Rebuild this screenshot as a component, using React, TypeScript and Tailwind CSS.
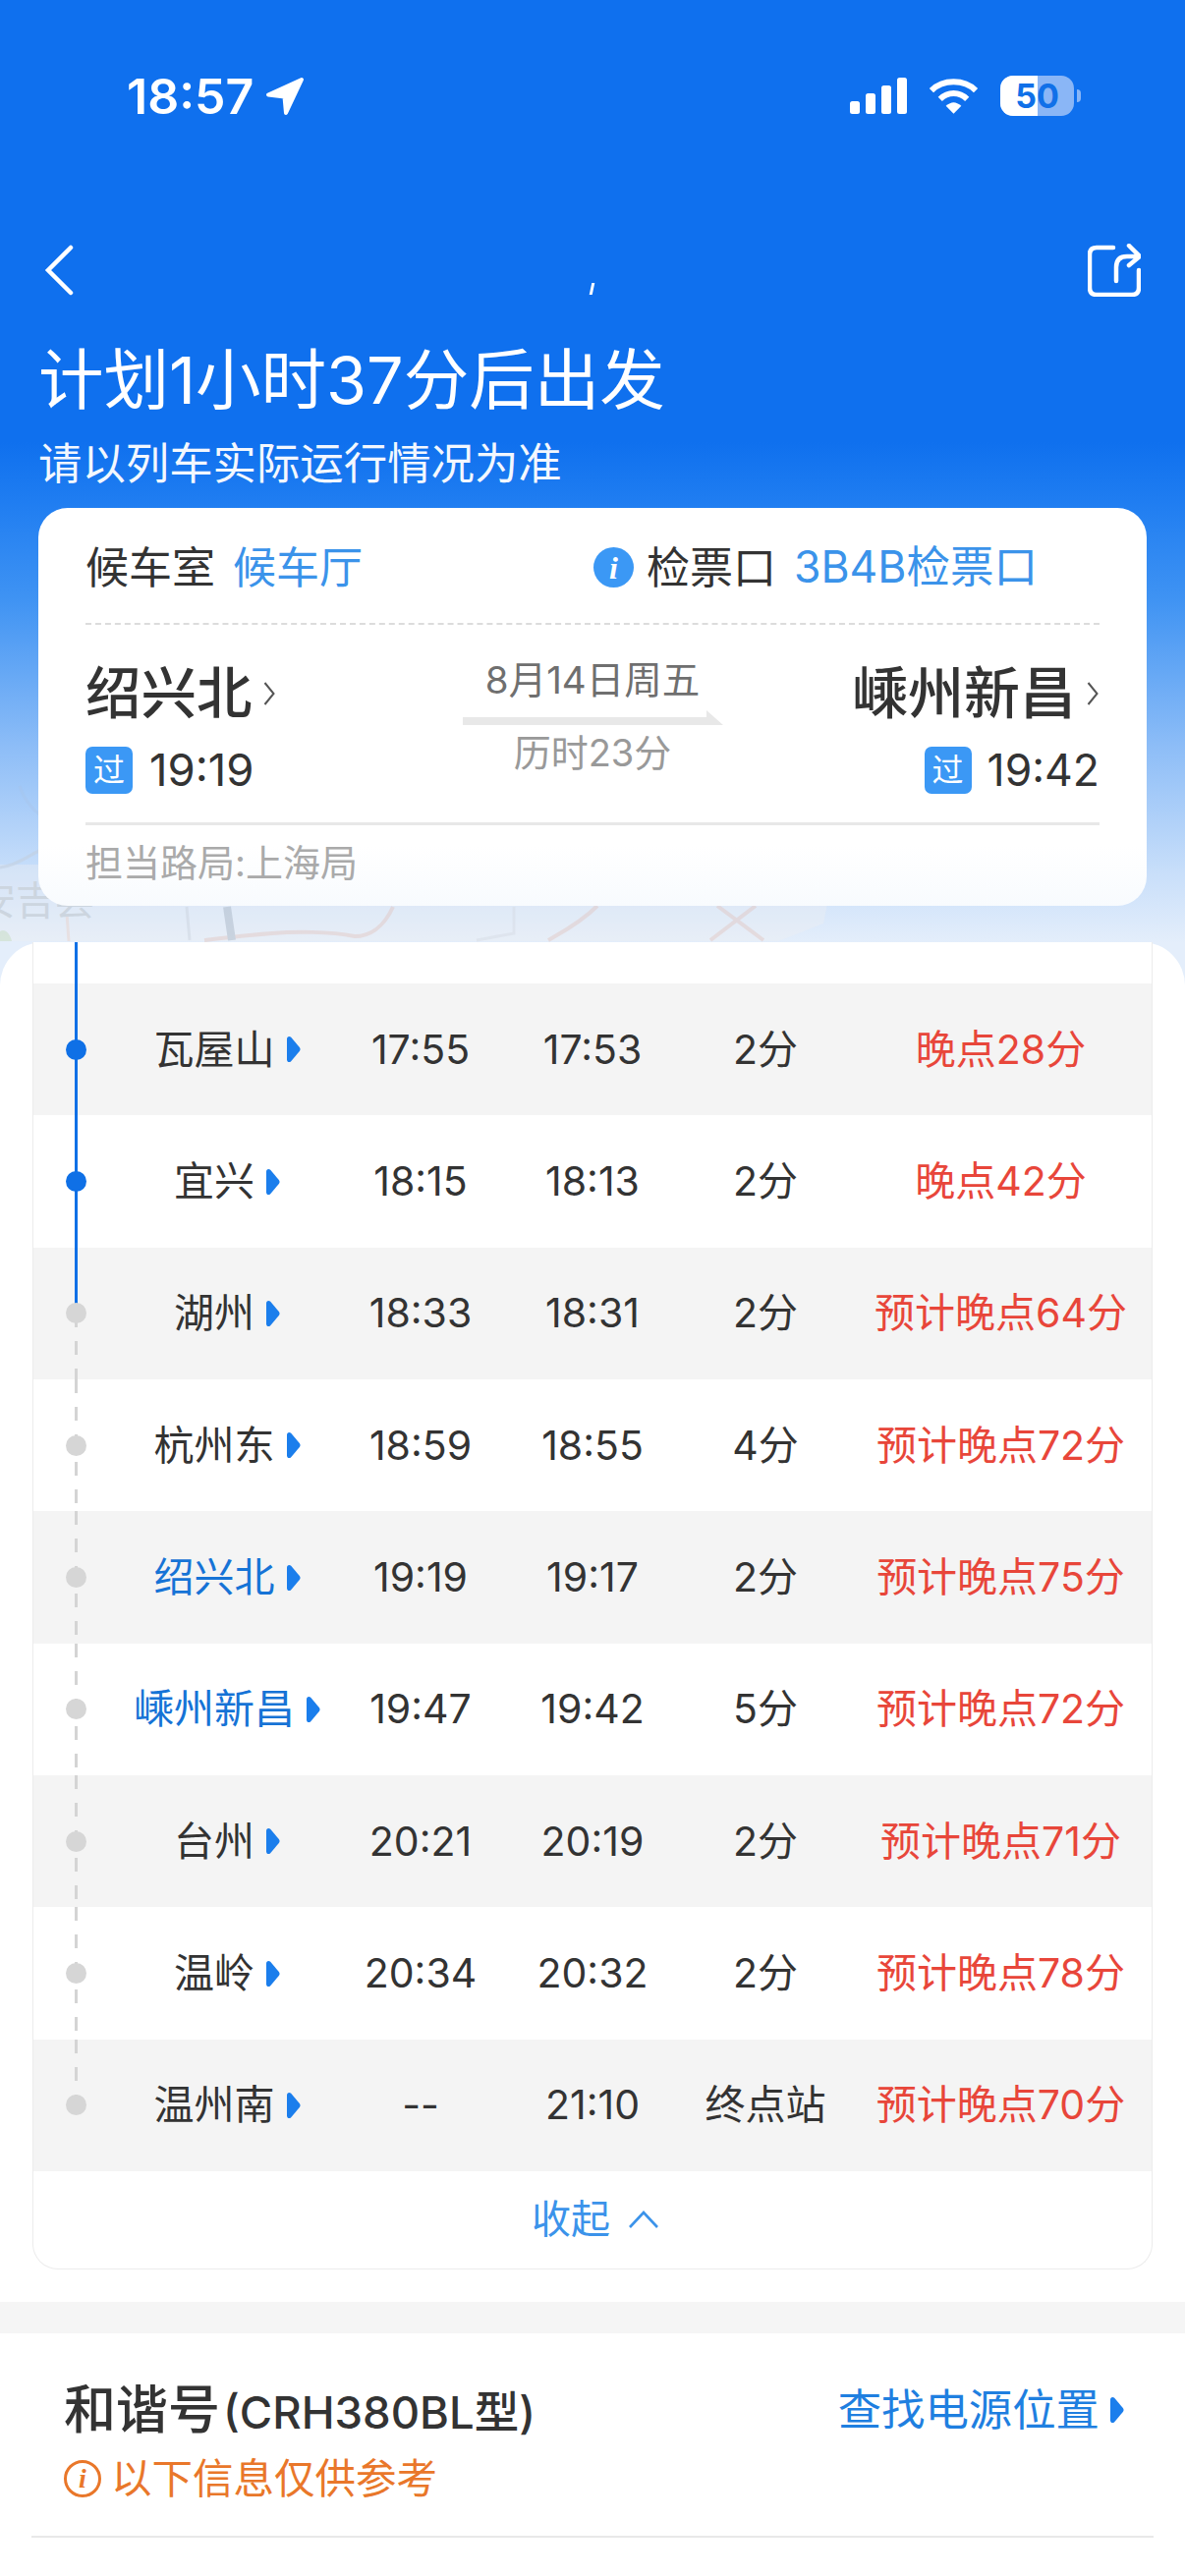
const STACK = "font-['Inter','Noto_Sans_CJK_SC',sans-serif]";

type Row = { name: string; a: string; b: string; stop: string; status: string; hl?: boolean; bg?: boolean; line: "blue" | "mix" | "dash" | "end"; dot: "blue" | "gray" };

const rows: Row[] = [
  { name: "瓦屋山", a: "17:55", b: "17:53", stop: "2分", status: "晚点28分", bg: true, line: "blue", dot: "blue" },
  { name: "宜兴", a: "18:15", b: "18:13", stop: "2分", status: "晚点42分", line: "blue", dot: "blue" },
  { name: "湖州", a: "18:33", b: "18:31", stop: "2分", status: "预计晚点64分", bg: true, line: "mix", dot: "gray" },
  { name: "杭州东", a: "18:59", b: "18:55", stop: "4分", status: "预计晚点72分", line: "dash", dot: "gray" },
  { name: "绍兴北", a: "19:19", b: "19:17", stop: "2分", status: "预计晚点75分", hl: true, bg: true, line: "dash", dot: "gray" },
  { name: "嵊州新昌", a: "19:47", b: "19:42", stop: "5分", status: "预计晚点72分", hl: true, line: "dash", dot: "gray" },
  { name: "台州", a: "20:21", b: "20:19", stop: "2分", status: "预计晚点71分", bg: true, line: "dash", dot: "gray" },
  { name: "温岭", a: "20:34", b: "20:32", stop: "2分", status: "预计晚点78分", line: "dash", dot: "gray" },
  { name: "温州南", a: "--", b: "21:10", stop: "终点站", status: "预计晚点70分", bg: true, line: "end", dot: "gray" },
];

const DASH = "bg-[repeating-linear-gradient(to_bottom,#d4d4d4_0,#d4d4d4_14px,transparent_14px,transparent_28px)]";

function Tri() {
  return (
    <svg viewBox="0 0 15 28" className="w-[15px] h-[28px] shrink-0">
      <path d="M1 3.5 C1 .8 3.6 .2 5.2 1.8 L13.8 12 C14.8 13.2 14.8 14.8 13.8 16 L5.2 26.2 C3.6 27.8 1 27.2 1 24.5 Z" fill="#1b7eec" />
    </svg>
  );
}

function Chevron() {
  return (
    <svg viewBox="0 0 14 28" className="w-[14px] h-[28px] shrink-0">
      <path d="M2.5 3 L11.5 14 L2.5 25" fill="none" stroke="#555" strokeWidth="2" />
    </svg>
  );
}

function Badge() {
  return <span className="w-[48px] h-[48px] rounded-[7px] bg-[#3b98f5] text-white text-[32px] leading-[48px] text-center shrink-0">过</span>;
}

function StationRow({ r }: { r: Row }) {
  return (
    <div className={`grid grid-cols-[61px_272px_122px_228px_124px_1fr] items-center h-[134.35px] text-[41px] leading-none text-[#333] ${r.bg ? "bg-[#f4f4f4]" : "bg-white"}`}>
      <div className="relative h-full flex items-center justify-start pl-[33px]">
        {r.line === "blue" && <div className="absolute left-[42px] top-0 bottom-0 w-[3px] bg-[#0f70e6]" />}
        {r.line === "mix" && (
          <>
            <div className="absolute left-[42px] top-0 h-1/2 w-[3px] bg-[#0f70e6]" />
            <div className={`absolute left-[42px] top-1/2 h-1/2 w-[3px] ${DASH}`} />
          </>
        )}
        {r.line === "dash" && <div className={`absolute left-[42px] top-0 bottom-0 w-[3px] ${DASH}`} />}
        {r.line === "end" && <div className={`absolute left-[42px] top-0 h-1/2 w-[3px] ${DASH}`} />}
        <span className={`relative w-[21px] h-[21px] rounded-full ${r.dot === "blue" ? "bg-[#0f70e6]" : "bg-[#d6d6d6]"}`} />
      </div>
      <div className="flex items-center justify-center gap-[11px]">
        <span className={`text-[41px] ${r.hl ? "text-[#1673d6]" : "text-[#333]"}`}>{r.name}</span>
        <Tri />
      </div>
      <div className="text-center">{r.a}</div>
      <div className="text-center">{r.b}</div>
      <div className="text-center">{r.stop}</div>
      <div className="text-center pl-[24px] text-[#e8463a] whitespace-nowrap">{r.status}</div>
    </div>
  );
}

function MapLines() {
  return (
    <>
      <svg viewBox="0 0 1206 190" className="absolute left-0 top-[780px] w-[1206px] h-[190px] opacity-60" fill="none">
        <path d="M0 100 L60 100 L60 140 L842 140 L838 160 L792 178 L0 178 Z" fill="#f2f0f2" fillOpacity="0.55" />
        <path d="M0 103 C20 100 30 90 38 87 C60 70 70 60 90 50" stroke="#c5ccd6" strokeWidth="3" opacity="0.7" />
        <path d="M20 20 C30 50 60 70 110 60" stroke="#a9c4e6" strokeWidth="3" opacity="0.5" />
        <path d="M400 143 C390 165 375 173 361 173 C335 168 300 168 277 170 C250 172 225 175 208 177 M608 142 C590 160 570 170 558 177 M730 142 L777 177 M769 142 L723 177" stroke="#e6d0cc" strokeWidth="4" />
        <path d="M68 150 L70 178" stroke="#ecd9d3" strokeWidth="3" />
        <path d="M190 143 L193 177" stroke="#d5dae2" strokeWidth="3" />
        <path d="M231 143 L236 177" stroke="#b9c2cd" strokeWidth="8" />
        <path d="M523 143 L523 170 L485 177" stroke="#dde0e6" strokeWidth="3" />
        <path d="M0 168 C5 165 10 170 12 178 L0 178 Z" fill="#cfe0c8" />
      </svg>
      <span className="absolute left-[-24px] top-[893px] text-[40px] leading-[48px] text-[#ccd5df] whitespace-nowrap">安吉县</span>
    </>
  );
}

export default function App() {
  return (
    <div className={`relative w-[1206px] h-[2622px] overflow-hidden ${STACK} bg-[linear-gradient(to_bottom,#0f70ee_0px,#0f70ee_450px,#1f7df1_510px,#3f93f3_610px,#8dbdf7_760px,#c9dffa_890px,#e4eefb_960px)]`}>
      <MapLines />
      <div className="relative flex flex-col">
        {/* status bar */}
        <div className="flex items-center justify-between h-[41px] mt-[77px] pl-[129px] pr-[106px] text-white">
          <div className="flex items-center gap-[12px]">
            <span className="font-semibold text-[50px] leading-none">18:57</span>
            <svg viewBox="0 0 40 40" className="w-[40px] h-[40px]">
              <path d="M37 3 L3 18.5 L19.5 20.5 L21 37 Z" fill="#fff" stroke="#fff" strokeWidth="4" strokeLinejoin="round" />
            </svg>
          </div>
          <div className="flex items-center gap-[22px]">
            <svg viewBox="0 0 58 37" className="w-[58px] h-[37px]">
              <rect x="0" y="24" width="10" height="13" rx="2.5" fill="#fff" />
              <rect x="16" y="16" width="10" height="21" rx="2.5" fill="#fff" />
              <rect x="32" y="8" width="10" height="29" rx="2.5" fill="#fff" />
              <rect x="48" y="0" width="10" height="37" rx="2.5" fill="#fff" />
            </svg>
            <svg viewBox="0 0 52 38" className="w-[51px] h-[38px]" fill="none" stroke="#fff" strokeWidth="6">
              <path d="M3 13 C15 1 37 1 49 13" />
              <path d="M12 22 C20 14 32 14 40 22" />
              <path d="M18 29 L26 37 L34 29 C28 24 24 24 18 29 Z" fill="#fff" stroke="none" />
            </svg>
            <div className="flex items-center gap-[3px]">
              <div className="relative w-[75px] h-[41px] rounded-[13px] overflow-hidden bg-[#8ab6f6] flex items-center justify-center">
                <div className="absolute left-0 top-0 bottom-0 w-[38px] bg-white" />
                <span className="relative font-bold text-[34px] leading-none text-[#1070e8]">50</span>
              </div>
              <div className="w-[4px] h-[13px] rounded-r-full bg-[#8ab6f6]" />
            </div>
          </div>
        </div>

        {/* nav */}
        <div className="relative flex items-center justify-between h-[55px] mt-[129px] pl-[45px] pr-[45px]">
          <svg viewBox="0 0 30 52" className="w-[30px] h-[52px]" fill="none" stroke="#fff" strokeWidth="4.5" strokeLinecap="round">
            <path d="M27 3 L4 26 L27 49" />
          </svg>
          <span className="absolute left-[601px] top-[41px] w-[3px] h-[12px] bg-white skew-x-[-12deg]" />
          <svg viewBox="0 0 54 54" className="w-[54px] h-[54px]" fill="none" stroke="#fff" strokeWidth="4.5" strokeLinecap="round" strokeLinejoin="round">
            <path d="M26 4 L9 4 Q2 4 2 11 L2 45 Q2 52 9 52 L45 52 Q52 52 52 45 L52 27" />
            <path d="M29 38 L29 24 Q29 13 40 13 L52 13 M42 2 L53 13 L42 22" />
          </svg>
        </div>

        {/* title */}
        <div className="mt-[45px] pl-[39px] text-white text-[66.5px] leading-[80px] whitespace-nowrap">计划1小时37分后出发</div>
        <div className="mt-[17px] pl-[39px] text-white text-[44.4px] leading-[56px] whitespace-nowrap opacity-95">请以列车实际运行情况为准</div>

        {/* card */}
        <div className="mt-[17px] mx-[39px] h-[405px] rounded-[30px] bg-[linear-gradient(to_bottom,#ffffff_85%,#f8fbfe_100%)] px-[48px] flex flex-col">
          <div className="flex items-center h-[119px] pt-[4px] text-[44px] leading-none border-b-2 border-dashed border-[#dcdcdc] whitespace-nowrap">
            <span className="text-[#333]">候车室</span>
            <span className="ml-[18px] text-[#3b93ea]">候车厅</span>
            <span className="ml-[235px] w-[41px] h-[41px] rounded-full bg-[#3b98f5] text-white flex items-center justify-center font-['Liberation_Serif',serif] italic font-bold text-[32px]">i</span>
            <span className="ml-[13px] text-[#333]">检票口</span>
            <span className="ml-[18px] text-[44.5px] text-[#3b93ea]">3B4B检票口</span>
          </div>
          <div className="grid grid-cols-[1fr_auto_1fr] h-[204px] border-b-[3px] border-[#e8e8e8]">
            <div className="flex flex-col pt-[37px]">
              <div className="flex items-center gap-[10px]">
                <span className="text-[56.5px] leading-[66px] font-medium text-[#333]">绍兴北</span>
                <Chevron />
              </div>
              <div className="flex items-center gap-[17px] mt-[21px]">
                <Badge />
                <span className="text-[45.5px] leading-none text-[#333]">19:19</span>
              </div>
            </div>
            <div className="flex flex-col items-center pt-[34px]">
              <span className="text-[38.5px] leading-[44px] text-[#6f6f6f] whitespace-nowrap">8月14日周五</span>
              <svg viewBox="0 0 265 15" className="w-[265px] h-[15px] mt-[9px]">
                <path d="M0 7 L248 7 L248 0 L265 15 L0 15 Z" fill="#e8e8e8" />
              </svg>
              <span className="mt-[5px] text-[38px] leading-[46px] text-[#999] whitespace-nowrap">历时23分</span>
            </div>
            <div className="flex flex-col items-end pt-[37px]">
              <div className="flex items-center gap-[10px]">
                <span className="text-[57px] leading-[66px] font-medium text-[#333] whitespace-nowrap">嵊州新昌</span>
                <Chevron />
              </div>
              <div className="flex items-center gap-[16px] mt-[21px]">
                <Badge />
                <span className="text-[44.5px] leading-none text-[#333]">19:42</span>
              </div>
            </div>
          </div>
          <div className="mt-[16px] text-[38px] leading-[44px] text-[#aaa]">担当路局:上海局</div>
        </div>

        {/* timetable */}
        <div className="mt-[37px] bg-white rounded-t-[44px] flex flex-col">
          <div className="mx-[33px] h-[1351px] bg-white border-x border-b border-[#ececec] rounded-b-[26px] flex flex-col overflow-hidden">
            <div className="relative h-[42px] shrink-0">
              <div className="absolute left-[42px] top-0 bottom-0 w-[3px] bg-[#0f70e6]" />
            </div>
            {rows.map((r) => (
              <StationRow key={r.name} r={r} />
            ))}
            <div className="flex-1 flex items-center justify-center gap-[18px] pl-[6px] pb-[2px]">
              <span className="text-[40px] leading-none text-[#3b93ea]">收起</span>
              <svg viewBox="0 0 32 20" className="w-[32px] h-[20px]" fill="none" stroke="#3b93ea" strokeWidth="2.6">
                <path d="M2 18 L16 3 L30 18" />
              </svg>
            </div>
          </div>

          <div className="mt-[33px] h-[32px] bg-[#f5f5f5]" />

          <div className="bg-white h-[248px] flex flex-col">
            <div className="flex justify-between items-start pt-[46px] pl-[65px] pr-[62px] h-[206px]">
              <div className="flex flex-col">
                <div className="flex items-baseline whitespace-nowrap text-[#333]">
                  <span className="text-[53px] leading-[64px] font-medium">和谐号</span>
                  <span className="ml-[3px] text-[45.5px] leading-[64px] font-medium">(CRH380BL型)</span>
                </div>
                <div className="flex items-center gap-[10px] mt-[9px]">
                  <span className="w-[38px] h-[38px] rounded-full border-[3px] border-[#e9772a] text-[#e9772a] flex items-center justify-center font-['Liberation_Serif',serif] italic font-bold text-[28px] leading-none">i</span>
                  <span className="text-[41.5px] leading-[52px] text-[#e9772a] whitespace-nowrap">以下信息仅供参考</span>
                </div>
              </div>
              <div className="flex items-center gap-[10px] mt-[3px]">
                <span className="text-[44.4px] leading-[58px] text-[#1f7fe0] whitespace-nowrap">查找电源位置</span>
                <Tri />
              </div>
            </div>
            <div className="mx-[32px] h-[2px] bg-[#e8e8e8]" />
          </div>
        </div>
      </div>
    </div>
  );
}
